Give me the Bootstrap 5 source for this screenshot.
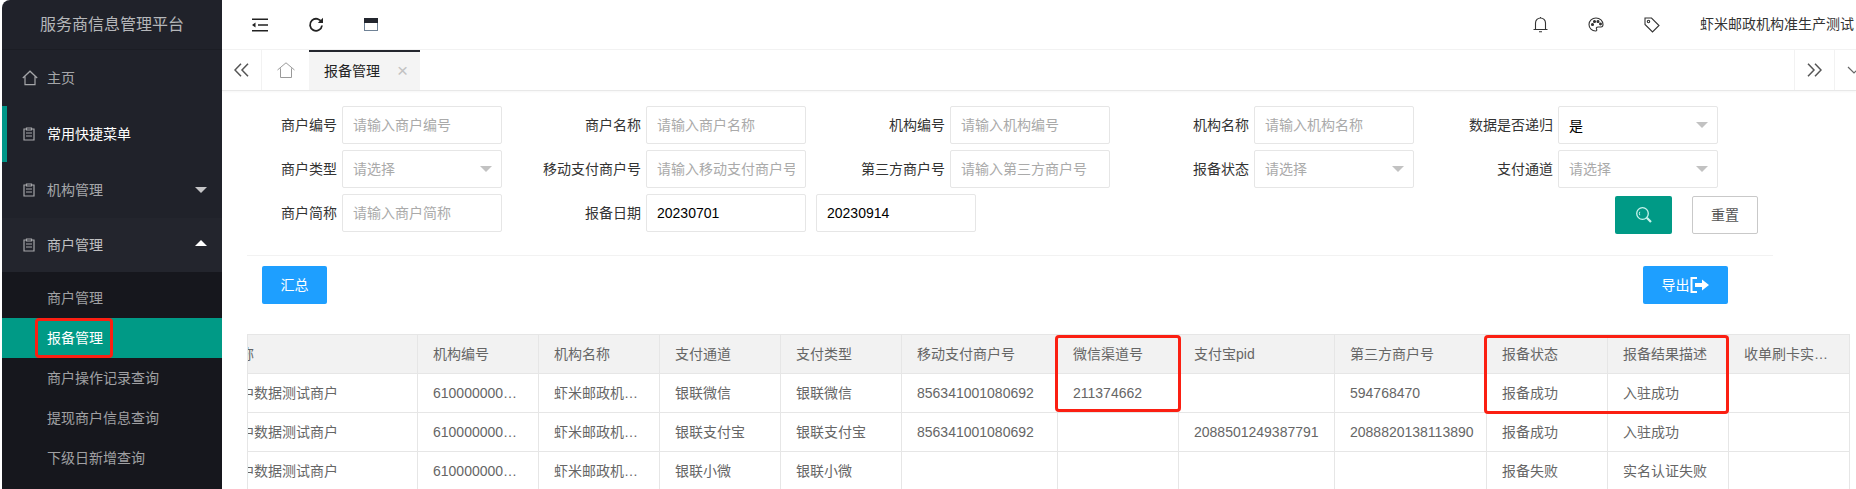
<!DOCTYPE html>
<html lang="zh-CN">
<head>
<meta charset="utf-8">
<title>服务商信息管理平台</title>
<link href="https://cdn.jsdelivr.net/npm/bootstrap@5.3.0/dist/css/bootstrap.min.css" rel="stylesheet">
<style>
html,body{height:100%;overflow:hidden;background:#fff}
body{font-family:"Liberation Sans","Noto Sans CJK SC",sans-serif;font-size:14px;color:#333;padding-left:2px}
.app-shell{height:489px;overflow:hidden}
.side{width:220px;flex:none;background:#20222a;border-top-left-radius:8px;color:rgba(255,255,255,.7)}
.side-title{height:50px;line-height:50px;font-size:16px;text-align:center;color:#b5b7ba;border-bottom:1px solid #1b1d24}
.side-item{height:56px;padding-left:21px;gap:12px;position:relative;color:rgba(255,255,255,.62)}
.side-item.home-row{padding-left:20px;gap:9px}
.side-item.on{color:#fff;border-left:5px solid #009688;padding-left:16px}
.side-item.open{height:54px;background:#23252d;color:rgba(255,255,255,.72)}
.side-item svg{flex:none}
.caret-d,.caret-u{position:absolute;right:15px;width:0;height:0;border-left:6px solid transparent;border-right:6px solid transparent}
.caret-d{top:25px;border-top:6px solid #c5c5c7}
.caret-u{top:22px;border-bottom:6px solid #fff}
.side-sub{background:#16171d;padding-top:6px}
.side-sub a{display:block;height:40px;line-height:40px;padding-left:45px;color:rgba(255,255,255,.6);text-decoration:none;position:relative}
.side-sub a.active-sub{background:#009a86;color:#fff}
.mark-side{position:absolute;left:33px;top:0;width:78px;height:40px;border:3px solid #fb1f12;border-radius:4px}
.top-bar{height:50px;border-bottom:1px solid #f2f2f2}
.top-left{padding-left:30px;gap:40px}
.top-cell{width:56px;flex:none}
.top-user{width:156px;flex:none;margin-left:20px;white-space:nowrap;overflow:hidden;color:#333}
.tab-bar{height:41px;border-bottom:1px solid #e8e8e8;box-shadow:0 1px 2px rgba(0,0,0,.04)}
.tab-cell{width:40px;flex:none;height:40px;border-right:1px solid #f2f2f2}
.tab-cell.rgt{border-right:0;border-left:1px solid #f2f2f2}
.tab-home{width:47px;flex:none;height:40px}
.tab-active{width:111px;flex:none;height:40px;background:#f4f4f4;border-top:2px solid #23262e;padding-left:15px;color:#222;position:relative}
.tab-x{position:absolute;left:88px;top:9px;color:#c2c2c2;font-size:19px;line-height:20px}
.tab-fill{flex:1}
.tab-last{width:22px;flex:none;height:40px;border-left:1px solid #f2f2f2;padding-left:12px;overflow:hidden}
.filter-wrap{padding:15px 0 0 16px}
.filter-row{gap:40px;margin-bottom:6px}
.fld{width:264px;flex:none;gap:5px}
.fld-lbl{width:99px;flex:none;text-align:right;color:#333;white-space:nowrap}
.fld-input{width:160px;height:38px;flex:none;border:1px solid #e6e6e6;border-radius:2px;padding:0 10px;font-size:14px;color:#000;background:#fff;outline:0}
.fld-input::placeholder{color:#aaa}
.fld-select{position:relative}
.fld-select::after{content:"";position:absolute;right:10px;top:16px;width:0;height:0;border-left:6px solid transparent;border-right:6px solid transparent;border-top:6px solid #c2c2c2}
.date-second{margin-left:-30px}
.row-three{width:1520px}
.btn-pair{gap:20px;margin-top:2px;margin-bottom:-2px}
.btn-search{width:57px;height:38px;background:#009a86;border:0;border-radius:2px;padding:0}
.btn-reset{width:66px;height:38px;background:#fff;border:1px solid #c9c9c9;border-radius:2px;color:#555;padding:0;font-size:14px}
.btn-blue{height:38px;background:#1e9fff;color:#fff;border:0;border-radius:2px;font-size:14px;padding:0}
.btn-sum{width:65px}
.btn-export{width:85px}
.divider-line{height:1px;background:#f2f2f2;margin:23px 0 10px 25px;width:1526px}
.action-row{margin-left:40px;width:1466px}
.tbl-wrap{position:relative;margin:30px 0 0 25px;width:1601px}
.tbl{table-layout:fixed;width:1601px;margin:0;border-color:#e6e6e6;color:#666;--bs-border-color:#e6e6e6;--bs-table-color:#666}
.tbl th,.tbl td{height:39px;padding:0 15px;vertical-align:middle;font-weight:400;font-size:14px;white-space:nowrap;color:#666;border:1px solid #e6e6e6}
.tbl thead th{background:#f2f2f2}
.tbl .clip-h{padding:0;text-indent:-50px;overflow:hidden}
.tbl .clip-d{padding:0;text-indent:-8px;overflow:hidden}
.col-a{width:170px}.col-b{width:121px}.col-c{width:156px}.col-d{width:152px}
.mark-box{position:absolute;border:3px solid #fb1f12;border-radius:4px}
.mark-a{left:808px;top:1px;width:126px;height:77px}
.mark-b{left:1237px;top:1px;width:245px;height:79px}
</style>
</head>
<body>
<div class="app-shell d-flex">
  <aside class="side d-flex flex-column">
    <div class="side-title">服务商信息管理平台</div>
    <div class="side-item home-row d-flex align-items-center">
      <svg width="16" height="16" viewBox="0 0 16 16" fill="none" stroke="#a5a6a9" stroke-width="1.2"><path d="M.8 8 8 1.2 15.2 8M3 6.600V14.600H13V6.600"/></svg>主页
    </div>
    <div class="side-item on d-flex align-items-center">
      <svg width="12" height="14" viewBox="0 0 12 14" fill="none" stroke="#a5a6a9" stroke-width="1.2"><path d="M3 2H1v11h10V2H9M3.500 1h5v2h-5zM3 6h6M3 9h6"/></svg><span>常用快捷菜单</span>
    </div>
    <div class="side-item d-flex align-items-center">
      <svg width="12" height="14" viewBox="0 0 12 14" fill="none" stroke="#a5a6a9" stroke-width="1.2"><path d="M3 2H1v11h10V2H9M3.500 1h5v2h-5zM3 6h6M3 9h6"/></svg><span>机构管理</span><i class="caret-d"></i>
    </div>
    <div class="side-item open d-flex align-items-center">
      <svg width="12" height="14" viewBox="0 0 12 14" fill="none" stroke="#a5a6a9" stroke-width="1.2"><path d="M3 2H1v11h10V2H9M3.500 1h5v2h-5zM3 6h6M3 9h6"/></svg><span>商户管理</span><i class="caret-u"></i>
    </div>
    <div class="side-sub flex-grow-1">
      <a href="#">商户管理</a>
      <a href="#" class="active-sub">报备管理<i class="mark-side"></i></a>
      <a href="#">商户操作记录查询</a>
      <a href="#">提现商户信息查询</a>
      <a href="#">下级日新增查询</a>
    </div>
  </aside>
  <main class="flex-grow-1 overflow-hidden">
    <div class="top-bar d-flex align-items-center">
      <div class="top-left d-flex align-items-center flex-grow-1">
        <svg width="16" height="14" viewBox="0 0 16 14" fill="none" stroke="#222" stroke-width="1.5"><path d="M0 1.200h16M6 7h10M0 12.800h16"/><path d="M0 7l3.500-2.500v5z" fill="#222" stroke="none"/></svg>
        <svg width="16" height="16" viewBox="0 0 16 16" fill="none" stroke="#222" stroke-width="1.8"><path d="M13.600 5.500A6 6 0 1 0 14 8.500"/><path d="M15 .8v5.200H9.800z" fill="#222" stroke="none"/></svg>
        <svg width="14" height="13" viewBox="0 0 14 13"><rect x=".5" y=".5" width="13" height="12" fill="#fff" stroke="#6f8296"/><rect width="14" height="5" fill="#23262e"/></svg>
      </div>
      <div class="d-flex align-items-center">
        <div class="top-cell d-flex justify-content-center">
          <svg width="15" height="17" viewBox="0 0 15 17" fill="none" stroke="#333" stroke-width="1.1"><path d="M.5 13.500h14M2.500 13.500V7a5 5 0 0 1 10 0v6.500M6 15.800h3M7.500 1V2"/></svg>
        </div>
        <div class="top-cell d-flex justify-content-center">
          <svg width="16" height="15" viewBox="0 0 16 15" fill="none" stroke="#333" stroke-width="1.1"><path d="M8 1C4 1 1 3.800 1 7.500S4 14 7.500 14c1.500 0 1.500-1 1-2s0-2 1.500-2h3c1.500 0 2-1 2-2.500C15 3.800 12 1 8 1z"/><circle cx="4.500" cy="7.500" r="1" fill="#333"/><circle cx="6.500" cy="4.500" r="1" fill="#333"/><circle cx="10" cy="4.500" r="1" fill="#333"/><circle cx="12.500" cy="7" r=".9" fill="#333"/></svg>
        </div>
        <div class="top-cell d-flex justify-content-center">
          <svg width="16" height="16" viewBox="0 0 16 16" fill="none" stroke="#333" stroke-width="1.1"><path d="M1 1h6.500L15 8.500 8.500 15 1 7.500z"/><circle cx="4.500" cy="4.500" r="1.200"/></svg>
        </div>
        <div class="top-user">虾米邮政机构准生产测试</div>
      </div>
    </div>
    <div class="tab-bar d-flex">
      <div class="tab-cell d-flex align-items-center justify-content-center">
        <svg width="15" height="14" viewBox="0 0 15 14" fill="none" stroke="#555" stroke-width="1.500"><path d="M7 .8 1 7l6 6.200M14 .8 8 7l6 6.200"/></svg>
      </div>
      <div class="tab-home d-flex align-items-center justify-content-center">
        <svg width="18" height="16" viewBox="0 0 18 16" fill="none" stroke="#9a9a9a" stroke-width="1"><path d="M.5 8 9 .8 17.500 8M3.500 6.300v9.200H14.500V6.300"/></svg>
      </div>
      <div class="tab-active d-flex align-items-center">报备管理<span class="tab-x">×</span></div>
      <div class="tab-fill"></div>
      <div class="tab-cell rgt d-flex align-items-center justify-content-center">
        <svg width="15" height="14" viewBox="0 0 15 14" fill="none" stroke="#555" stroke-width="1.500"><path d="M1 .8 7 7l-6 6.200M8 .8 14 7l-6 6.200"/></svg>
      </div>
      <div class="tab-last d-flex align-items-center">
        <svg width="14" height="8" viewBox="0 0 14 8" fill="none" stroke="#666" stroke-width="1.200" class="flex-shrink-0"><path d="M1 1l6 6 6-6"/></svg>
      </div>
    </div>
    <div class="filter-wrap">
      <div class="filter-row d-flex">
        <div class="fld d-flex align-items-center"><label class="fld-lbl">商户编号</label><input class="fld-input" placeholder="请输入商户编号"></div>
        <div class="fld d-flex align-items-center"><label class="fld-lbl">商户名称</label><input class="fld-input" placeholder="请输入商户名称"></div>
        <div class="fld d-flex align-items-center"><label class="fld-lbl">机构编号</label><input class="fld-input" placeholder="请输入机构编号"></div>
        <div class="fld d-flex align-items-center"><label class="fld-lbl">机构名称</label><input class="fld-input" placeholder="请输入机构名称"></div>
        <div class="fld d-flex align-items-center"><label class="fld-lbl">数据是否递归</label><div class="fld-select"><input class="fld-input" value="是"></div></div>
      </div>
      <div class="filter-row d-flex">
        <div class="fld d-flex align-items-center"><label class="fld-lbl">商户类型</label><div class="fld-select"><input class="fld-input" placeholder="请选择"></div></div>
        <div class="fld d-flex align-items-center"><label class="fld-lbl">移动支付商户号</label><input class="fld-input" placeholder="请输入移动支付商户号"></div>
        <div class="fld d-flex align-items-center"><label class="fld-lbl">第三方商户号</label><input class="fld-input" placeholder="请输入第三方商户号"></div>
        <div class="fld d-flex align-items-center"><label class="fld-lbl">报备状态</label><div class="fld-select"><input class="fld-input" placeholder="请选择"></div></div>
        <div class="fld d-flex align-items-center"><label class="fld-lbl">支付通道</label><div class="fld-select"><input class="fld-input" placeholder="请选择"></div></div>
      </div>
      <div class="filter-row row-three d-flex m-0">
        <div class="fld d-flex align-items-center"><label class="fld-lbl">商户简称</label><input class="fld-input" placeholder="请输入商户简称"></div>
        <div class="fld d-flex align-items-center"><label class="fld-lbl">报备日期</label><input class="fld-input" value="20230701"></div>
        <div class="date-second d-flex"><input class="fld-input" value="20230914"></div>
        <div class="btn-pair ms-auto d-flex">
          <button class="btn-search d-flex align-items-center justify-content-center" type="button" aria-label="搜索">
            <svg width="18" height="18" viewBox="0 0 18 18" fill="none" stroke="#c8f3ec" stroke-width="1.300"><circle cx="7.500" cy="7.500" r="5.800"/><path d="M4.800 5.800a3.500 3.500 0 0 0 0 3.400" stroke-width="1"/><path d="M11.800 11.800 16 16" stroke-width="2.200"/></svg>
          </button>
          <button class="btn-reset" type="button">重置</button>
        </div>
      </div>
    </div>
    <div class="divider-line"></div>
    <div class="action-row d-flex justify-content-between">
      <button class="btn-blue btn-sum" type="button">汇总</button>
      <button class="btn-blue btn-export d-flex align-items-center justify-content-center" type="button">导出<svg width="20" height="16" viewBox="0 0 20 16" fill="none" stroke="#fff"><path d="M7 1H1.500v14H7" stroke-width="2"/><path d="M5 6h7V2.500L19 8l-7 5.500V10H5z" fill="#fff" stroke="none"/></svg></button>
    </div>
    <div class="tbl-wrap">
      <table class="tbl table table-bordered">
        <colgroup><col class="col-a"><col class="col-b"><col class="col-b"><col class="col-b"><col class="col-b"><col class="col-c"><col class="col-b"><col class="col-c"><col class="col-d"><col class="col-b"><col class="col-b"><col class="col-b"></colgroup>
        <thead><tr>
          <th class="clip-h">商户名称</th><th class="text-truncate">机构编号</th><th class="text-truncate">机构名称</th><th>支付通道</th><th>支付类型</th><th>移动支付商户号</th><th>微信渠道号</th><th>支付宝pid</th><th>第三方商户号</th><th>报备状态</th><th>报备结果描述</th><th class="text-truncate">收单刷卡实时到账</th>
        </tr></thead>
        <tbody>
          <tr><td class="clip-d">中数据测试商户</td><td class="text-truncate">6100000001234</td><td class="text-truncate">虾米邮政机构准生产测试</td><td>银联微信</td><td>银联微信</td><td>856341001080692</td><td>211374662</td><td></td><td>594768470</td><td>报备成功</td><td>入驻成功</td><td></td></tr>
          <tr><td class="clip-d">中数据测试商户</td><td class="text-truncate">6100000001234</td><td class="text-truncate">虾米邮政机构准生产测试</td><td>银联支付宝</td><td>银联支付宝</td><td>856341001080692</td><td></td><td>2088501249387791</td><td>2088820138113890</td><td>报备成功</td><td>入驻成功</td><td></td></tr>
          <tr><td class="clip-d">中数据测试商户</td><td class="text-truncate">6100000001234</td><td class="text-truncate">虾米邮政机构准生产测试</td><td>银联小微</td><td>银联小微</td><td></td><td></td><td></td><td></td><td>报备失败</td><td>实名认证失败</td><td></td></tr>
        </tbody>
      </table>
      <i class="mark-box mark-a"></i>
      <i class="mark-box mark-b"></i>
    </div>
  </main>
</div>
</body>
</html>
